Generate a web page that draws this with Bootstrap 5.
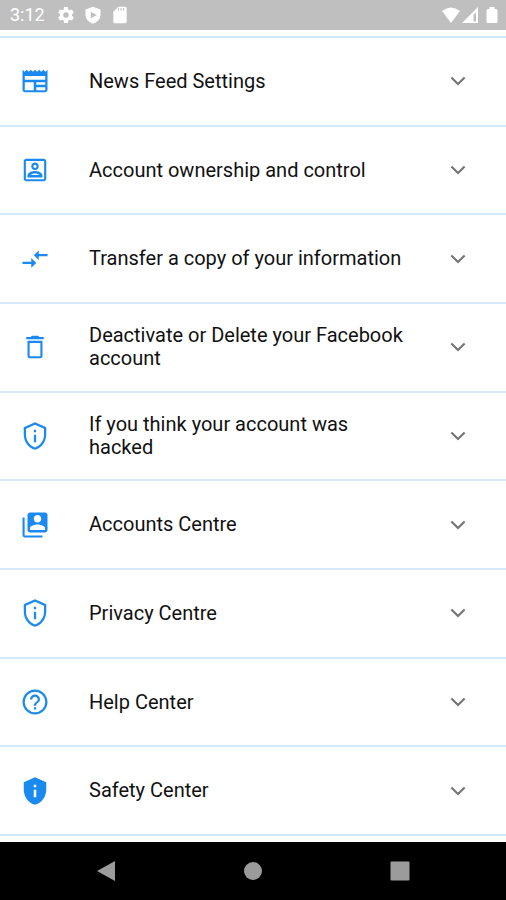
<!DOCTYPE html>
<html lang="en">
<head>
<meta charset="utf-8">
<meta name="viewport" content="width=device-width, initial-scale=1">
<title>Settings</title>
<link href="https://cdn.jsdelivr.net/npm/bootstrap@5.3.0/dist/css/bootstrap.min.css" rel="stylesheet">
<style>
  body { font-family: Roboto, "Liberation Sans", sans-serif; }
  svg { display: block; fill: currentColor; flex: none; }
  .status-bar { background: #bfbfbf; height: 30px; padding: 0 5px 0 10px; font-size: 18px; line-height: 30px; }
  .status-bar time { margin-right: 11px; }
  .settings { margin: 6px 0; border-top: 2px solid #d5e8fa; }
  .settings > li { flex: 1 0 0; border-bottom: 2px solid #d5e8fa; }
  .entry { padding: 0 33px 0 20px; font-size: 20px; line-height: 23px; color: #111; }
  .entry-icon { width: 30px; height: 30px; color: #1a8af0; }
  .entry-label { margin: 0 33px 0 39px; }
  .chevron { width: 30px; height: 30px; color: #757575; }
  .nav-keys { height: 58px; padding: 0 33px; color: #9b9b9b; }
  .nav-keys .btn { color: inherit; }
</style>
<script src="https://cdn.jsdelivr.net/npm/bootstrap@5.3.0/dist/js/bootstrap.bundle.min.js"></script>
</head>
<body>
<svg class="d-none" aria-hidden="true">
  <symbol id="chev" viewBox="0 0 24 24"><path d="m7.300 8.500 4.700 4.700 4.700-4.700 1.200 1.200-5.900 5.900-5.900-5.900z"/></symbol>
  <symbol id="shield" viewBox="0 0 24 24"><path d="M12 1 3 5v6c0 5.550 3.840 10.740 9 12 5.160-1.260 9-6.450 9-12V5l-9-4zm7.200 10c0 4.520-2.980 8.800-7.200 10.100C7.780 19.800 4.800 15.520 4.800 11V6.200L12 3l7.200 3.200V11zM11.100 11h1.800v6h-1.800zM11.100 7h1.800v2h-1.800z"/></symbol>
</svg>
<div class="d-flex flex-column min-vh-100">
  <header class="status-bar d-flex align-items-center text-white">
    <time>3:12</time>
    <svg width="20" height="20" viewBox="0 0 24 24"><path d="M19.140 12.940c.04-.3.06-.61.06-.94s-.02-.64-.07-.94l2.030-1.580c.18-.14.23-.41.12-.61l-1.920-3.320c-.12-.22-.37-.29-.59-.22l-2.390.96c-.5-.38-1.030-.7-1.620-.94l-.36-2.540c-.04-.24-.24-.41-.48-.41h-3.840c-.24 0-.43.17-.47.41l-.36 2.540c-.59.24-1.130.57-1.620.94l-2.390-.96c-.22-.08-.47 0-.59.22L2.740 8.870c-.12.21-.08.47.12.61l2.030 1.580c-.05.3-.09.63-.09.94s.02.64.07.94l-2.030 1.580c-.18.14-.23.41-.12.61l1.920 3.320c.12.22.37.29.59.22l2.390-.96c.5.38 1.030.7 1.620.94l.36 2.540c.05.24.24.41.48.41h3.840c.24 0 .44-.17.47-.41l.36-2.540c.59-.24 1.130-.56 1.620-.94l2.390.96c.22.08.47 0 .59-.22l1.920-3.320c.12-.22.07-.47-.12-.61l-2.010-1.580zM12 15.300A3.300 3.300 0 1 1 12 8.700a3.300 3.300 0 0 1 0 6.600z"/></svg>
    <svg class="ms-2" width="18" height="18" viewBox="0 0 24 24"><path fill-rule="evenodd" d="M12 1 2 4.500v7C2 17 6 21.500 12 23.500 18 21.500 22 17 22 11.500v-7zM9 7.500 17 12l-8 4.500z"/></svg>
    <svg class="ms-2" width="20" height="20" viewBox="0 0 24 24"><path d="M18 2h-8L4 8v12c0 1.100.9 2 2 2h12c1.100 0 2-.9 2-2V4c0-1.100-.9-2-2-2zM11 6.500H9.500V4H11zm3 0h-1.500V4H14zm3 0h-1.500V4H17z"/></svg>
    <svg class="ms-auto" width="20" height="18" viewBox="0 0 20 18"><path d="M10 17 1 5Q10-2 19 5z"/></svg>
    <svg width="18" height="18" viewBox="0 0 18 18"><path fill-rule="evenodd" d="M1 17 17 1v16zM12.500 9v6.500H15V6.500z"/></svg>
    <svg class="ms-1" width="18" height="18" viewBox="0 0 18 18"><path d="M6.500 1h5v2h1q2 0 2 2v11q0 1-1 1h-9q-1 0-1-1V5q0-2 2-2h1z"/></svg>
  </header>

  <main class="d-flex flex-column flex-grow-1">
    <ul class="settings list-unstyled d-flex flex-column flex-grow-1">
      <li class="d-flex"><button type="button" class="entry btn rounded-0 border-0 w-100 d-flex align-items-center text-start">
        <svg class="entry-icon" viewBox="0 0 24 24"><path d="m22 3-1.670 1.670L18.670 3 17 4.670 15.330 3l-1.660 1.670L12 3l-1.670 1.670L8.670 3 7 4.670 5.330 3 3.670 4.670 2 3v16c0 1.100.9 2 2 2h16c1.100 0 2-.9 2-2V3zM11 19.300H3.800V13H11v6.300zm9.200 0H13V17h7.200v2.300zm0-4.300H13v-2h7.200v2zm0-4H3.800V8h16.400v3z"/></svg>
        <span class="entry-label flex-fill">News Feed Settings</span><svg class="chevron"><use href="#chev"/></svg></button></li>
      <li class="d-flex"><button type="button" class="entry btn rounded-0 border-0 w-100 d-flex align-items-center text-start">
        <svg class="entry-icon" viewBox="0 0 24 24"><path d="M19.300 4.700v14.600H4.700V4.700h14.600m-.3-1.700H5c-1.100 0-2 .9-2 2v14c0 1.100.9 2 2 2h14c1.100 0 2-.9 2-2V5c0-1.100-.9-2-2-2zM12 12c-1.650 0-3-1.350-3-3s1.350-3 3-3 3 1.350 3 3-1.350 3-3 3zm0-4.300a1.300 1.300 0 1 0 0 2.600 1.300 1.300 0 0 0 0-2.600zM18 18H6v-1.530c0-2.500 3.970-3.580 6-3.580s6 1.080 6 3.580V18zm-9.690-2h7.380c-.69-.56-2.380-1.120-3.690-1.120s-3.010.56-3.690 1.120z"/></svg>
        <span class="entry-label flex-fill">Account ownership and control</span><svg class="chevron"><use href="#chev"/></svg></button></li>
      <li class="d-flex"><button type="button" class="entry btn rounded-0 border-0 w-100 d-flex align-items-center text-start">
        <svg class="entry-icon" viewBox="0 0 24 24"><path d="M2 14.200h7v-2.900l4 3.800L9 18.900V16H2zM22 8h-7V5.100l-4 3.800 4 3.800V9.800h7z"/></svg>
        <span class="entry-label flex-fill">Transfer a copy of your information</span><svg class="chevron"><use href="#chev"/></svg></button></li>
      <li class="d-flex"><button type="button" class="entry btn rounded-0 border-0 w-100 d-flex align-items-center text-start">
        <svg class="entry-icon" viewBox="0 0 24 24"><path fill-rule="evenodd" d="M14.500 3h-5l-1 1H5v1.800h14V4h-3.500zM6 7v12q0 2 2 2h8q2 0 2-2V7zm1.700 1.700h8.600v10.600H7.700z"/></svg>
        <span class="entry-label flex-fill">Deactivate or Delete your Facebook account</span><svg class="chevron"><use href="#chev"/></svg></button></li>
      <li class="d-flex"><button type="button" class="entry btn rounded-0 border-0 w-100 d-flex align-items-center text-start">
        <svg class="entry-icon"><use href="#shield"/></svg>
        <span class="entry-label flex-fill">If you think your account was hacked</span><svg class="chevron"><use href="#chev"/></svg></button></li>
      <li class="d-flex"><button type="button" class="entry btn rounded-0 border-0 w-100 d-flex align-items-center text-start">
        <svg class="entry-icon" viewBox="0 0 24 24"><path d="M3.700 6H2v14c0 1.100.9 2 2 2h14v-1.700H3.700V6zM20 2H8c-1.100 0-2 .9-2 2v12c0 1.100.9 2 2 2h12c1.100 0 2-.9 2-2V4c0-1.100-.9-2-2-2zm-6 2c1.660 0 3 1.340 3 3s-1.340 3-3 3-3-1.340-3-3 1.340-3 3-3zm6 12H8v-1.500c0-1.990 4-3 6-3s6 1.010 6 3V16z"/></svg>
        <span class="entry-label flex-fill">Accounts Centre</span><svg class="chevron"><use href="#chev"/></svg></button></li>
      <li class="d-flex"><button type="button" class="entry btn rounded-0 border-0 w-100 d-flex align-items-center text-start">
        <svg class="entry-icon"><use href="#shield"/></svg>
        <span class="entry-label flex-fill">Privacy Centre</span><svg class="chevron"><use href="#chev"/></svg></button></li>
      <li class="d-flex"><button type="button" class="entry btn rounded-0 border-0 w-100 d-flex align-items-center text-start">
        <svg class="entry-icon" viewBox="0 0 24 24"><path d="M11.100 18h1.800v-1.900h-1.800V18zM12 2C6.480 2 2 6.480 2 12s4.480 10 10 10 10-4.480 10-10S17.520 2 12 2zm0 18.200a8.200 8.200 0 1 1 0-16.400 8.200 8.200 0 0 1 0 16.400zM12 6c-2.210 0-4 1.790-4 4h1.800c0-1.200 1-2.200 2.200-2.200s2.200 1 2.200 2.200c0 2-3.100 1.750-3.100 5h1.800c0-2.250 3.100-2.500 3.100-5 0-2.210-1.790-4-4-4z"/></svg>
        <span class="entry-label flex-fill">Help Center</span><svg class="chevron"><use href="#chev"/></svg></button></li>
      <li class="d-flex"><button type="button" class="entry btn rounded-0 border-0 w-100 d-flex align-items-center text-start">
        <svg class="entry-icon" viewBox="0 0 24 24"><path d="M12 1 3 5v6c0 5.550 3.840 10.740 9 12 5.160-1.260 9-6.450 9-12V5l-9-4zm-1 6h2v2h-2V7zm0 4h2v6h-2v-6z"/></svg>
        <span class="entry-label flex-fill">Safety Center</span><svg class="chevron"><use href="#chev"/></svg></button></li>
    </ul>
  </main>

  <nav class="nav-keys bg-black d-flex align-items-center justify-content-around" aria-label="System">
    <button type="button" class="btn border-0 p-0" aria-label="Back"><svg width="22" height="22" viewBox="0 0 22 22"><path d="M2 11 20 1v20z"/></svg></button>
    <button type="button" class="btn border-0 p-0" aria-label="Home"><svg width="22" height="22" viewBox="0 0 22 22"><circle cx="11" cy="11" r="9"/></svg></button>
    <button type="button" class="btn border-0 p-0" aria-label="Recent apps"><svg width="22" height="22" viewBox="0 0 22 22"><rect x="1.500" y="1.500" width="19" height="19" rx="1"/></svg></button>
  </nav>
</div>
</body>
</html>
